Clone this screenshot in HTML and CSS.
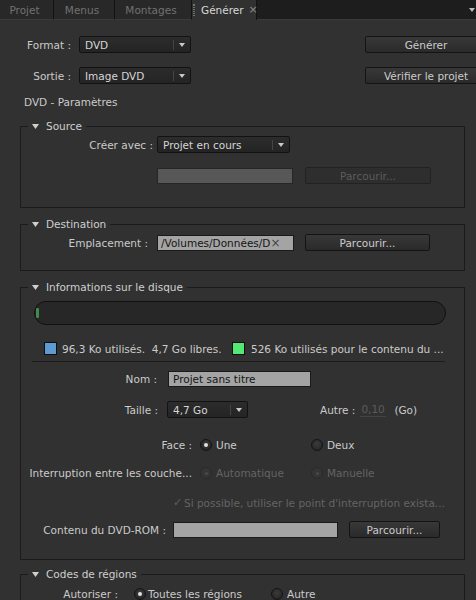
FILE: index.html
```html
<!DOCTYPE html>
<html lang="fr">
<head>
<meta charset="utf-8">
<title>Générer</title>
<link rel="stylesheet" href="styles.css">
</head>
<body>
<div class="tabs">
  <div class="tab t1">Projet</div>
  <div class="tab t2">Menus</div>
  <div class="tab t3">Montages</div>
  <div class="tab active"><span class="grip"></span>Générer<span class="close">×</span></div>
  <div class="tabfill"><svg width="6" height="4" viewBox="0 0 6 4"><path d="M0 0H6L3 4Z" fill="#bdbdbd"/></svg></div>
</div>

<div class="top">
  <div class="topleft">
    <div class="frow">
      <span class="lbl l-top">Format :</span>
      <div class="select s-top">DVD<span class="arr"><svg width="6" height="4" viewBox="0 0 6 4"><path d="M0 0H6L3 4Z" fill="#c8c8c8"/></svg></span></div>
    </div>
    <div class="frow mt14">
      <span class="lbl l-top">Sortie :</span>
      <div class="select s-top">Image DVD<span class="arr"><svg width="6" height="4" viewBox="0 0 6 4"><path d="M0 0H6L3 4Z" fill="#c8c8c8"/></svg></span></div>
    </div>
  </div>
  <div class="topright">
    <div class="btn b-top">Générer</div>
    <div class="btn b-top mt14">Vérifier le projet</div>
  </div>
</div>

<div class="title">DVD - Paramètres</div>

<fieldset class="grp g-src">
  <legend><svg width="7" height="5" viewBox="0 0 7 5"><path d="M0 0H7L3.5 5Z" fill="#cfcfcf"/></svg>Source</legend>
  <div class="frow mt4">
    <span class="lbl l-creer">Créer avec :</span>
    <div class="select s-creer">Projet en cours<span class="arr"><svg width="6" height="4" viewBox="0 0 6 4"><path d="M0 0H6L3 4Z" fill="#c8c8c8"/></svg></span></div>
  </div>
  <div class="frow src2">
    <div class="field dis f-src"></div>
    <div class="btn dis b-src">Parcourir...</div>
  </div>
</fieldset>

<fieldset class="grp g-dest">
  <legend><svg width="7" height="5" viewBox="0 0 7 5"><path d="M0 0H7L3.5 5Z" fill="#cfcfcf"/></svg>Destination</legend>
  <div class="frow mt4">
    <span class="lbl l-empl">Emplacement :</span>
    <div class="field f-empl"><span class="ftext">/Volumes/Données/D</span><span class="clear">×</span></div>
    <div class="btn b-empl">Parcourir...</div>
  </div>
</fieldset>

<fieldset class="grp g-info">
  <legend><svg width="7" height="5" viewBox="0 0 7 5"><path d="M0 0H7L3.5 5Z" fill="#cfcfcf"/></svg>Informations sur le disque</legend>
  <div class="pill"><span class="used"></span></div>
  <div class="disklegend">
    <div class="item1"><span class="sw blue"></span>96,3 Ko utilisés.&nbsp; 4,7 Go libres.</div>
    <div class="item2"><span class="sw green"></span>526 Ko utilisés pour le contenu du ...</div>
  </div>
  <div class="sep"></div>
  <div class="frow r-nom">
    <span class="lbl l-nom">Nom :</span>
    <div class="field f-nom"><span class="ftext">Projet sans titre</span></div>
  </div>
  <div class="frow r-taille">
    <span class="lbl l-taille">Taille :</span>
    <div class="select s-taille">4,7 Go<span class="arr"><svg width="6" height="4" viewBox="0 0 6 4"><path d="M0 0H6L3 4Z" fill="#c8c8c8"/></svg></span></div>
    <span class="autre">Autre :</span>
    <span class="num">0,10</span>
    <span class="unit">(Go)</span>
  </div>
  <div class="frow r-face">
    <span class="lbl l-face">Face :</span>
    <span class="opt o-first"><span class="radio on"></span>Une</span>
    <span class="opt"><span class="radio"></span>Deux</span>
  </div>
  <div class="frow r-int">
    <span class="lbl l-face">Interruption entre les couche...</span>
    <span class="opt o-first dim"><span class="radio disr"></span>Automatique</span>
    <span class="opt dim"><span class="radio disr"></span>Manuelle</span>
  </div>
  <div class="frow r-chk dim">
    <span class="check">✓</span>Si possible, utiliser le point d'interruption exista...
  </div>
  <div class="frow r-cont">
    <span class="lbl l-cont">Contenu du DVD-ROM :</span>
    <div class="field f-cont"></div>
    <div class="btn b-cont">Parcourir...</div>
  </div>
</fieldset>

<fieldset class="grp g-codes">
  <legend><svg width="7" height="5" viewBox="0 0 7 5"><path d="M0 0H7L3.5 5Z" fill="#cfcfcf"/></svg>Codes de régions</legend>
  <div class="frow r-aut">
    <span class="lbl l-aut">Autoriser :</span>
    <span class="opt o-toutes"><span class="radio on"></span>Toutes les régions</span>
    <span class="opt"><span class="radio"></span>Autre</span>
  </div>
</fieldset>
</body>
</html>
```

FILE: styles.css
```css
* { box-sizing: border-box; }
html, body { margin: 0; padding: 0; }
body {
  width: 476px;
  height: 600px;
  overflow: hidden;
  background: #313131;
  color: #cbcbcb;
  font-family: "DejaVu Sans", "Liberation Sans", sans-serif;
  font-size: 10.5px;
  line-height: 12px;
}

/* tabs */
.tabs { display: flex; height: 20px; background: #1d1d1d; }
.tab {
  height: 20px;
  border-right: 1px solid #121212;
  border-bottom: 1px solid #3a3a3a;
  background: #282828;
  color: #717171;
  display: flex;
  align-items: center;
  justify-content: center;
  padding-right: 4px;
}
.t1 { width: 54px; }
.t2 { width: 61px; }
.t3 { width: 77px; }
.tab.active {
  width: 65px;
  background: #313131;
  color: #d8d8d8;
  border-bottom: none;
  justify-content: flex-start;
  padding: 0 0 0 1px;
}
.grip {
  width: 3px;
  height: 12px;
  border-left: 1px dotted #707070;
  border-right: 1px dotted #707070;
  margin-right: 6px;
}
.close { color: #888; margin-left: 5px; font-size: 11px; }
.tabfill {
  flex: 1;
  border-bottom: 1px solid #3a3a3a;
  display: flex;
  align-items: center;
  justify-content: flex-end;
  padding-right: 1px;
}

/* generic */
.frow { display: flex; align-items: center; }
.lbl { text-align: right; white-space: nowrap; flex-shrink: 0; }
.mt14 { margin-top: 14px; }
.mt4 { margin-top: 4px; }
.dim { color: #646464; }

.select {
  height: 17px;
  border: 1px solid #121212;
  border-radius: 2px;
  background: linear-gradient(#2c2c2c, #242424);
  color: #d6d6d6;
  display: flex;
  align-items: center;
  padding-left: 5px;
  flex-shrink: 0;
}
.select .arr {
  margin-left: auto;
  width: 17px;
  height: 10px;
  border-left: 1px solid #444;
  display: flex;
  align-items: center;
  justify-content: center;
}

.btn {
  height: 17px;
  border: 1px solid #141414;
  border-radius: 2px;
  background: linear-gradient(#383838, #2a2a2a);
  color: #cbcbcb;
  display: flex;
  align-items: center;
  justify-content: center;
  flex-shrink: 0;
}
.btn.dis {
  background: #2e2e2e;
  border-color: #222;
  color: #5c5c5c;
}

.field {
  height: 16px;
  border: 1px solid #1a1a1a;
  background: #a4a4a4;
  color: #141414;
  display: flex;
  align-items: center;
  padding-left: 4px;
  overflow: hidden;
  flex-shrink: 0;
}
.field.dis { background: #575757; border-color: #262626; }
.ftext { white-space: nowrap; overflow: hidden; }
.clear { color: #444; font-size: 12px; padding: 0 2px 0 0; }

/* top area */
.top { display: grid; grid-template-columns: 365px 122px; padding-top: 16px; }
.l-top { width: 71px; margin-right: 8px; }
.s-top { width: 112px; }
.b-top { width: 122px; }

.title { margin: 12px 0 0 24px; }

/* group boxes */
.grp {
  margin: 0 0 0 20px;
  width: 445px;
  min-width: 0;
  border: 1px solid #1b1b1b;
  padding: 0;
}
.grp legend {
  margin-left: 7px;
  padding: 0 4px;
  line-height: 12px;
  color: #cfcfcf;
}
.grp legend svg { margin-right: 7px; vertical-align: 1px; }

.g-src { margin-top: 12px; padding-bottom: 23px; }
.l-creer { width: 132px; margin-right: 4px; }
.s-creer { width: 133px; }
.src2 { margin-top: 14px; padding-left: 136px; }
.f-src { width: 136px; }
.b-src { width: 126px; margin-left: 12px; }

.g-dest { margin-top: 10px; padding-bottom: 19px; }
.l-empl { width: 127px; margin-right: 9px; }
.f-empl { width: 137px; padding-left: 3px; }
.b-empl { width: 125px; margin-left: 11px; }

.g-info { margin-top: 10px; padding-bottom: 21px; }
.pill {
  margin: 8px 0 0 13px;
  width: 412px;
  height: 24px;
  border-radius: 12px;
  border: 1px solid #111;
  background: #272727;
  display: flex;
  align-items: center;
}
.pill .used {
  width: 3px;
  height: 10px;
  margin-left: 1px;
  border-radius: 1px;
  background: #3f8a4c;
}
.disklegend { display: flex; align-items: center; margin: 17px 0 0 23px; }
.item1, .item2 { display: flex; align-items: center; white-space: nowrap; }
.item1 { width: 188px; }
.sw { width: 13px; height: 13px; border: 1px solid #0e0e0e; margin-right: 5px; }
.sw.blue { background: #5e9bd3; }
.sw.green { background: #52e873; margin-right: 6px; }
.sep {
  margin: 6px 0 0 11px;
  width: 413px;
  height: 1px;
  background: #1c1c1c;
}

.r-nom { margin-top: 9px; height: 16px; }
.l-nom { width: 136px; margin-right: 11px; }
.f-nom { width: 143px; }

.r-taille { margin-top: 14px; }
.l-taille { width: 137px; margin-right: 9px; }
.s-taille { width: 81px; }
.autre { margin-left: 72px; margin-right: 5px; }
.num {
  color: #5c5c5c;
  border-bottom: 1px solid #444;
  width: 26px;
  padding-left: 1px;
  line-height: 13px;
}
.unit { margin-left: 8px; }

.radio {
  width: 12px;
  height: 12px;
  border-radius: 50%;
  border: 1px solid #141414;
  background: radial-gradient(circle at 50% 40%, #3c3c3c, #202020);
  margin-right: 4px;
  display: inline-flex;
  align-items: center;
  justify-content: center;
  flex-shrink: 0;
}
.radio.on::after {
  content: "";
  width: 4px;
  height: 4px;
  border-radius: 50%;
  background: #e2e2e2;
}
.radio.disr {
  border-color: #2a2a2a;
  background: #353535;
}
.radio.disr::after {
  content: "";
  width: 3px;
  height: 3px;
  border-radius: 50%;
  background: #4a4a4a;
}
.opt { display: flex; align-items: center; white-space: nowrap; }
.o-first { width: 111px; }

.r-face { margin-top: 21px; }
.l-face { width: 171px; margin-right: 8px; }
.r-int { margin-top: 16px; }
.r-chk { margin-top: 18px; padding-left: 152px; white-space: nowrap; }
.check { width: 11px; font-size: 11px; color: #5e5e5e; }

.r-cont { margin-top: 12px; }
.l-cont { width: 145px; margin-right: 7px; }
.f-cont { width: 165px; }
.b-cont { width: 91px; margin-left: 11px; }

.g-codes { margin-top: 8px; padding-bottom: 30px; }
.r-aut { margin-top: 8px; }
.l-aut { width: 97px; margin-right: 16px; }
.o-toutes { width: 137px; }
.r-aut .o-toutes .radio { margin-right: 2px; }
```
